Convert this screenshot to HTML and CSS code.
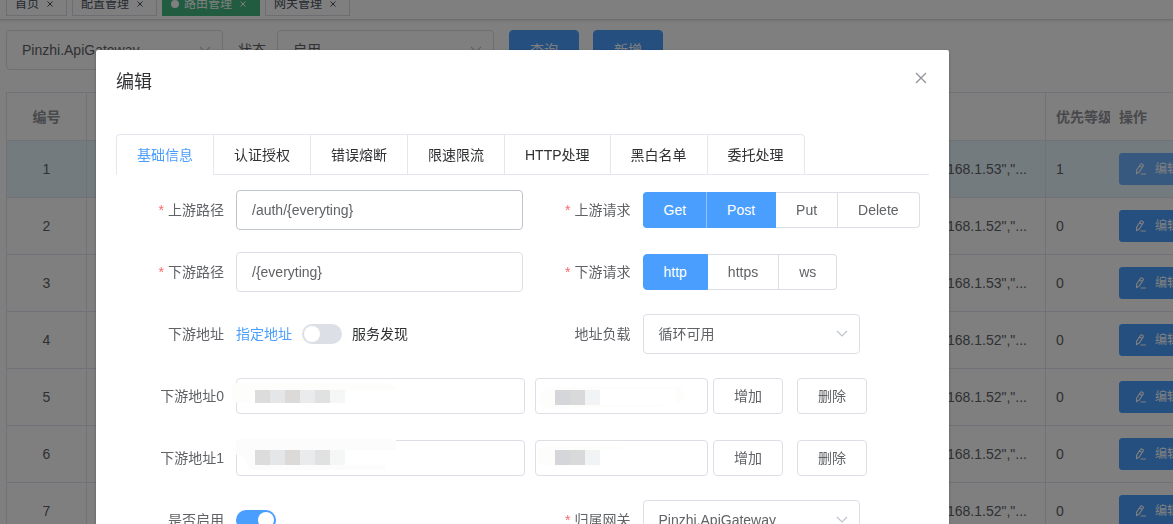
FILE: index.html
```html
<!DOCTYPE html>
<html lang="zh-CN">
<head>
<meta charset="utf-8">
<title>路由管理</title>
<link rel="stylesheet" href="styles.css">
</head>
<body>
<svg class="defs" aria-hidden="true">
  <symbol id="chevron" viewBox="0 0 12 8"><path d="M1 1l5 5 5-5" fill="none" stroke="currentColor" stroke-width="1.200"/></symbol>
  <symbol id="cross" viewBox="0 0 12 12"><path d="M1 1l10 10M11 1L1 11" fill="none" stroke="currentColor" stroke-width="1.300"/></symbol>
  <symbol id="tag-cross" viewBox="0 0 6 6"><path d="M.5.5l5 5M5.500.5l-5 5" fill="none" stroke="currentColor"/></symbol>
  <symbol id="pen" viewBox="0 0 12 12"><path d="M1.500 10.500V7.500L5.500 1.200Q6 .5 6.800 1L8 1.800Q8.700 2.300 8.200 3L4.200 9zM4.600 2.800l2.600 1.700M5.500 11h5.500" fill="none" stroke="currentColor" stroke-width="1.100"/></symbol>
</svg>
<div class="page">
  <nav class="tags">
    <a class="tag" href="#">首页<svg class="tag-x"><use href="#tag-cross"/></svg></a>
    <a class="tag" href="#">配置管理<svg class="tag-x"><use href="#tag-cross"/></svg></a>
    <a class="tag tag-active" href="#"><i class="dot"></i>路由管理<svg class="tag-x"><use href="#tag-cross"/></svg></a>
    <a class="tag" href="#">网关管理<svg class="tag-x"><use href="#tag-cross"/></svg></a>
  </nav>
  <main class="content">
    <div class="toolbar">
      <div class="select"><select aria-label="网关"><option>Pinzhi.ApiGateway</option></select><svg class="arrow"><use href="#chevron"/></svg></div>
      <label class="toolbar-label" for="state">状态</label>
      <div class="select"><select id="state"><option>启用</option></select><svg class="arrow"><use href="#chevron"/></svg></div>
      <button class="btn btn-primary btn-query">查询</button>
      <button class="btn btn-primary btn-new">新增</button>
    </div>
    <table class="table">
      <colgroup><col class="col-no"><col><col class="col-level"><col class="col-op"></colgroup>
      <thead><tr><th class="no">编号</th><th></th><th class="level">优先等级</th><th class="op">操作</th></tr></thead>
      <tbody>
        <tr class="current"><td class="no">1</td><td class="host">168.1.53","...</td><td class="level">1</td><td class="op"><button class="edit"><svg><use href="#pen"/></svg>编辑</button></td></tr>
        <tr><td class="no">2</td><td class="host">168.1.52","...</td><td class="level">0</td><td class="op"><button class="edit"><svg><use href="#pen"/></svg>编辑</button></td></tr>
        <tr><td class="no">3</td><td class="host">168.1.53","...</td><td class="level">0</td><td class="op"><button class="edit"><svg><use href="#pen"/></svg>编辑</button></td></tr>
        <tr><td class="no">4</td><td class="host">168.1.52","...</td><td class="level">0</td><td class="op"><button class="edit"><svg><use href="#pen"/></svg>编辑</button></td></tr>
        <tr><td class="no">5</td><td class="host">168.1.52","...</td><td class="level">0</td><td class="op"><button class="edit"><svg><use href="#pen"/></svg>编辑</button></td></tr>
        <tr><td class="no">6</td><td class="host">168.1.52","...</td><td class="level">0</td><td class="op"><button class="edit"><svg><use href="#pen"/></svg>编辑</button></td></tr>
        <tr><td class="no">7</td><td class="host">168.1.52","...</td><td class="level">0</td><td class="op"><button class="edit"><svg><use href="#pen"/></svg>编辑</button></td></tr>
      </tbody>
    </table>
  </main>
</div>
<div class="overlay">
  <section class="dialog" role="dialog" aria-labelledby="title">
    <header class="dialog-head">
      <h1 id="title">编辑</h1>
      <button class="close" aria-label="关闭"><svg><use href="#cross"/></svg></button>
    </header>
    <div class="tabs" role="tablist">
      <button class="tab tab-active" role="tab" aria-selected="true">基础信息</button>
      <button class="tab" role="tab">认证授权</button>
      <button class="tab" role="tab">错误熔断</button>
      <button class="tab" role="tab">限速限流</button>
      <button class="tab" role="tab">HTTP处理</button>
      <button class="tab" role="tab">黑白名单</button>
      <button class="tab" role="tab">委托处理</button>
      <span class="tabs-rest"></span>
    </div>
    <form class="form">
      <div class="item">
        <label class="label required" for="up">上游路径</label>
        <input class="input input-hover" id="up" type="text" value="/auth/{everyting}">
      </div>
      <div class="item">
        <span class="label required" id="up-m">上游请求</span>
        <div class="group" role="group" aria-labelledby="up-m">
          <label class="seg"><input type="checkbox" checked><span>Get</span></label>
          <label class="seg"><input type="checkbox" checked><span>Post</span></label>
          <label class="seg"><input type="checkbox"><span>Put</span></label>
          <label class="seg"><input type="checkbox"><span>Delete</span></label>
        </div>
      </div>
      <div class="item">
        <label class="label required" for="down">下游路径</label>
        <input class="input" id="down" type="text" value="/{everyting}">
      </div>
      <div class="item">
        <span class="label required" id="down-m">下游请求</span>
        <div class="group" role="radiogroup" aria-labelledby="down-m">
          <label class="seg"><input type="radio" name="scheme" checked><span>http</span></label>
          <label class="seg"><input type="radio" name="scheme"><span>https</span></label>
          <label class="seg"><input type="radio" name="scheme"><span>ws</span></label>
        </div>
      </div>
      <div class="item">
        <label class="label" for="disc">下游地址</label>
        <div class="switch-row"><span class="on">指定地址</span><input class="switch" id="disc" type="checkbox" role="switch"><span>服务发现</span></div>
      </div>
      <div class="item">
        <label class="label" for="lb">地址负载</label>
        <div class="select"><select id="lb"><option>循环可用</option></select><svg class="arrow"><use href="#chevron"/></svg></div>
      </div>
      <div class="item wide">
        <label class="label" for="h0">下游地址0</label>
        <div class="field field-host"><input class="input medium" id="h0" type="text">
          <svg class="mosaic" viewBox="0 0 180 40" aria-hidden="true">
            <path d="M3 5H152Q162 5 165 12H20V25H7Q0 24 0 15Q0 7 3 5Z" fill="#fdfdfc"/>
            <path d="M24 12h15v13H24z" fill="#dcdcdc"/><path d="M39 12h15v13H39z" fill="#e5e6e8"/><path d="M54 12h15v13H54z" fill="#dcdad9"/><path d="M69 12h15v13H69z" fill="#eaebed"/><path d="M84 12h15v13H84z" fill="#e1e1e1"/><path d="M99 12h15v13H99z" fill="#f5f7f7"/>
          </svg></div>
        <div class="field field-port"><input class="input medium" aria-label="端口0" type="text">
          <svg class="mosaic" viewBox="0 0 180 40" aria-hidden="true">
            <path d="M20 9H148Q154 12 154 20Q150 28 120 29H55Q40 32 20 31Q9 30 9 20Q10 11 20 9Z" fill="#fdfdfc"/>
            <path d="M25 12h15v15H25z" fill="#d5d6da"/><path d="M40 12h15v15H40z" fill="#d9d9d9"/><path d="M55 12h15v15H55z" fill="#f2f3f5"/><path d="M70 11h76v16H70z" fill="#fff"/>
          </svg></div>
        <button class="btn medium btn-add" type="button">增加</button>
        <button class="btn medium btn-del" type="button">删除</button>
      </div>
      <div class="item wide">
        <label class="label" for="h1">下游地址1</label>
        <div class="field field-host"><input class="input medium" id="h1" type="text">
          <svg class="mosaic" viewBox="0 0 180 40" aria-hidden="true">
            <path d="M9 -1H165V7Q166 10 163 10H120V25H155Q155 30 148 30H22Q15 27 15 20L5 14V4Q5 -1 9 -1Z" fill="#fcfcfc"/>
            <path d="M24 10h15v15H24z" fill="#dcdcdc"/><path d="M39 10h15v15H39z" fill="#e5e6e8"/><path d="M54 10h15v15H54z" fill="#dcdad9"/><path d="M69 10h15v15H69z" fill="#eaebed"/><path d="M84 10h15v15H84z" fill="#e1e1e1"/><path d="M99 10h15v15H99z" fill="#f5f7f7"/><path d="M114 10h51v15H114z" fill="#fff"/>
          </svg></div>
        <div class="field field-port"><input class="input medium" aria-label="端口1" type="text">
          <svg class="mosaic" viewBox="0 0 180 40" aria-hidden="true">
            <path d="M14 6H90Q96 8 96 12Q96 22 88 26H14Q7 24 7 16Q7 9 14 6Z" fill="#fdfdfc"/>
            <path d="M25 10h15v15H25z" fill="#d5d6da"/><path d="M40 10h15v15H40z" fill="#d9d9d9"/><path d="M55 10h15v15H55z" fill="#f2f3f5"/><path d="M70 10h26v15H70z" fill="#fff"/>
          </svg></div>
        <button class="btn medium btn-add" type="button">增加</button>
        <button class="btn medium btn-del" type="button">删除</button>
      </div>
      <div class="item">
        <label class="label" for="enabled">是否启用</label>
        <div class="switch-row"><input class="switch switch-first" id="enabled" type="checkbox" role="switch" checked></div>
      </div>
      <div class="item">
        <label class="label required" for="gw">归属网关</label>
        <div class="select"><select id="gw"><option>Pinzhi.ApiGateway</option></select><svg class="arrow"><use href="#chevron"/></svg></div>
      </div>
    </form>
  </section>
</div>
</body>
</html>
```

FILE: styles.css
```css
* { box-sizing: border-box; }
html, body { height: 100%; }
body {
  margin: 0;
  overflow: hidden;
  background: #fff;
  color: #606266;
  font: 14px/20px "Liberation Sans", "Noto Sans CJK SC", sans-serif;
}
button, input, select { font: inherit; color: inherit; margin: 0; }
.defs { display: none; }
.page { height: 100%; overflow: hidden; }

/* Visited page tags */
.tags {
  display: flex;
  align-items: flex-end;
  gap: 5px;
  height: 20px;
  padding: 0 6px 3px;
  overflow: hidden;
  border-bottom: 1px solid #d8dce5;
  box-shadow: 0 1px 3px rgba(0, 0, 0, .12);
}
.tag {
  display: flex;
  flex: none;
  align-items: center;
  height: 26px;
  padding: 2px 8px 0;
  border: 1px solid #d8dce5;
  color: #495060;
  font-size: 12px;
  text-decoration: none;
}
.tag-active { background: #42b983; border-color: #42b983; color: #fff; }
.dot { width: 8px; height: 8px; margin-right: 5px; border-radius: 50%; background: #fff; }
.tag-x { width: 16px; height: 6px; margin-left: 3px; }

.content { padding: 10px 0 0 6px; }
.toolbar { display: flex; align-items: center; margin-bottom: 22px; }
.toolbar-label { margin: 0 11px 0 15px; }

.select { position: relative; width: 217px; height: 40px; }
.select select {
  width: 100%;
  height: 100%;
  padding: 0 30px 0 15px;
  appearance: none;
  border: 1px solid #dcdfe6;
  border-radius: 4px;
  background: #fff;
}
.arrow { position: absolute; right: 12px; top: 16px; width: 12px; height: 8px; color: #c0c4cc; pointer-events: none; }

.btn {
  width: 70px;
  height: 40px;
  padding: 0;
  border: 1px solid #dcdfe6;
  border-radius: 4px;
  background: #fff;
}
.btn-primary { border-color: #4a9ffe; background: #4a9ffe; color: #fff; }
.btn-query { margin-left: 15px; }
.btn-new { margin-left: 14px; }
.btn.medium { height: 36px; }

/* Route table */
.table {
  width: 100%;
  table-layout: fixed;
  border-collapse: separate;
  border-spacing: 0;
  border-top: 1px solid #e0e4ee;
  border-left: 1px solid #e0e4ee;
}
.col-no { width: 80px; }
.col-level { width: 64px; }
.col-op { width: 63px; }
.table th, .table td {
  padding: 0;
  overflow: hidden;
  white-space: nowrap;
  border-right: 1px solid #e0e4ee;
  border-bottom: 1px solid #e0e4ee;
}
.table th { height: 48px; color: #909399; text-align: left; }
.table td { height: 57px; }
.table .no { text-align: center; }
.table .host { padding-right: 18px; text-align: right; }
.table .level { padding-left: 10px; border-right: 0; }
.table .op { padding-left: 9px; border-right: 0; }
.current td { background: #e9f6ff; }
.edit {
  display: flex;
  align-items: center;
  gap: 8px;
  height: 32px;
  padding: 0 15px;
  border: 1px solid #4a9ffe;
  border-radius: 3px;
  background: #4a9ffe;
  color: #fff;
  font-size: 12px;
}
.current .edit { border-color: #6eb2fe; background: #6eb2fe; }
.edit svg { flex: none; width: 12px; height: 12px; }

/* Dialog */
.overlay { position: fixed; inset: 0; overflow: hidden; background: rgba(0, 0, 0, .5); }
.dialog {
  margin: 50px 224px 0 96px;
  padding: 20px;
  border-radius: 2px;
  background: #fff;
  box-shadow: 0 1px 3px rgba(0, 0, 0, .3);
}
.dialog-head { display: flex; justify-content: space-between; align-items: flex-start; height: 64px; }
.dialog-head h1 { margin: 0; color: #303133; font-size: 18px; font-weight: 400; line-height: 24px; }
.close { width: 16px; height: 16px; padding: 2px; border: 0; background: none; color: #909399; }
.close svg { display: block; width: 12px; height: 12px; }

.tabs { display: flex; height: 41px; margin-bottom: 15px; }
.tab {
  padding: 0 20px;
  border: 1px solid #e4e7ed;
  border-right: 0;
  background: none;
  color: #303133;
  white-space: nowrap;
}
.tab:first-child { border-top-left-radius: 4px; }
.tab:nth-last-child(2) { border-right: 1px solid #e4e7ed; border-top-right-radius: 4px; }
.tab-active { border-bottom-color: #fff; color: #4a9ffe; }
.tabs-rest { flex: 1; border-bottom: 1px solid #e4e7ed; }

.form { display: grid; grid-template-columns: 1fr 1fr; row-gap: 22px; }
.item { display: flex; align-items: center; height: 40px; min-width: 0; }
.wide { grid-column: 1 / -1; }
.label { flex: none; width: 120px; padding-right: 12px; text-align: right; }
.required::before { content: "*"; margin-right: 4px; color: #f56c6c; }
.input {
  width: 100%;
  height: 40px;
  min-width: 0;
  padding: 0 15px;
  border: 1px solid #dcdfe6;
  border-radius: 4px;
  background: #fff;
}
.input-hover { border-color: #c0c4cc; }
.input.medium { display: block; height: 36px; }

.group { display: flex; height: 36px; }
.seg { display: flex; position: relative; }
.seg input { position: absolute; inset: 0; width: 100%; height: 100%; opacity: 0; }
.seg span {
  display: flex;
  align-items: center;
  padding: 0 20px;
  border: 1px solid #dcdfe6;
  border-left-width: 0;
}
.seg:first-child span { border-left-width: 1px; border-radius: 4px 0 0 4px; }
.seg:last-child span { border-radius: 0 4px 4px 0; }
.seg input:checked + span { border-color: #4a9ffe; background: #4a9ffe; color: #fff; }
.seg:first-child:not(:nth-last-child(3)) input:checked + span { border-right-color: #8cc5ff; }

.switch-row { display: flex; align-items: center; color: #303133; }
.on { color: #4a9ffe; }
.switch {
  width: 40px;
  height: 20px;
  margin: 0 10px;
  padding: 2px;
  appearance: none;
  border-radius: 10px;
  background: #dcdfe6;
}
.switch::before { content: ""; display: block; width: 16px; height: 16px; border-radius: 50%; background: #fff; }
.switch:checked { background: #4a9ffe; }
.switch:checked::before { margin-left: 20px; }
.switch-first { margin-left: 0; }

.field { position: relative; }
.field-host { flex: 0 1 289px; margin-right: 10px; }
.field-port { flex: 0 1 173px; margin-right: 5px; }
.mosaic { position: absolute; left: -5px; top: 0; width: 180px; height: 40px; overflow: visible; pointer-events: none; }
.btn-del { margin-left: 14px; }
```
